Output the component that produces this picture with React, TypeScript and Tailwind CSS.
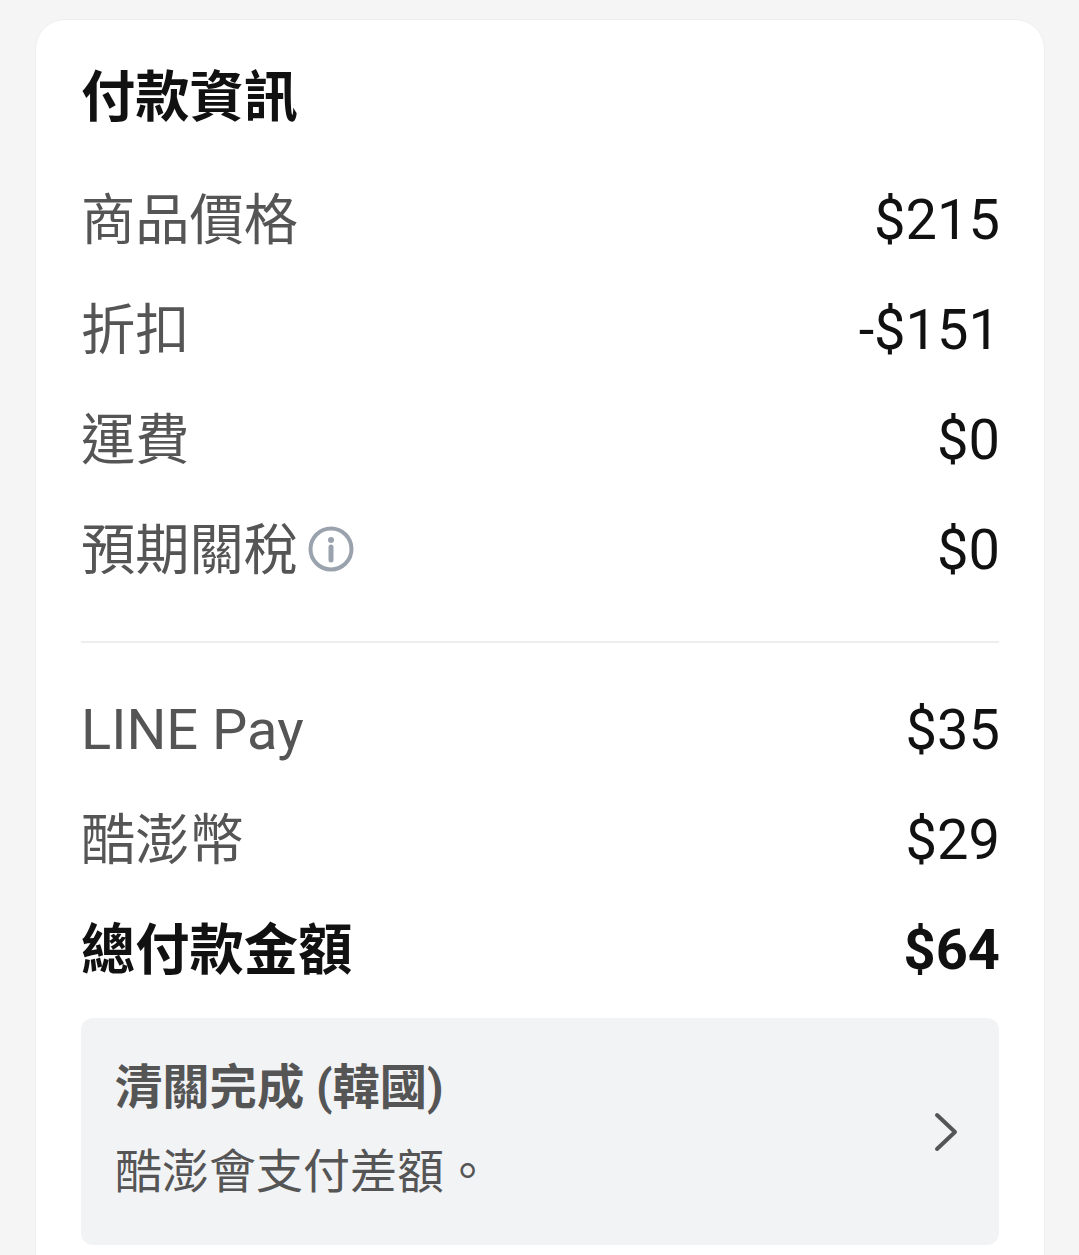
const font = "font-['Roboto','Noto_Sans_CJK_TC',sans-serif]";

function Row({ label, value, latin, children }: { label: string; value: string; latin?: boolean; children?: React.ReactNode }) {
  return (
    <div className="flex h-[66px] items-center justify-between">
      <div className={`flex items-center gap-[10px] text-[#555555] ${latin ? "text-[56px]" : ""}`}>
        <span className={latin ? "" : "translate-y-[1px]"}>{label}</span>
        {children}
      </div>
      <span className="mr-[-1px] text-[56px] text-[#111111]">{value}</span>
    </div>
  );
}

export default function App() {
  return (
    <div className={`h-[1255px] w-[1079px] overflow-hidden bg-[#f5f5f5] pt-[19px] pl-[35px] ${font} text-[54.25px] leading-[66px]`}>
      <div className="h-[1300px] w-[1010px] rounded-t-[30px] border border-[#eeeeee] bg-white px-[45px] pt-[44px]">
        <h2 className="h-[66px] translate-y-[1px] font-bold text-[#111111]">付款資訊</h2>
        <div className="mt-[57px] flex flex-col gap-[44px]">
          <Row label="商品價格" value="$215" />
          <Row label="折扣" value="-$151" />
          <Row label="運費" value="$0" />
          <Row label="預期關稅" value="$0">
            <svg className="-translate-y-[1px]" width="46" height="46" viewBox="0 0 46 46" fill="none" stroke="#9aa3ad">
              <circle cx="23" cy="23" r="20.5" strokeWidth="4" />
              <circle cx="23" cy="14" r="3" fill="#9aa3ad" stroke="none" />
              <path d="M23 21v13" strokeWidth="5" strokeLinecap="round" />
            </svg>
          </Row>
        </div>
        <div className="mt-[58px] h-[2px] bg-[#eeeeee]" />
        <div className="mt-[54px] flex flex-col gap-[44px]">
          <Row label="LINE Pay" value="$35" latin />
          <Row label="酷澎幣" value="$29" />
          <div className="flex h-[66px] items-center justify-between font-bold text-[#111111]">
            <span className="translate-y-[1px]">總付款金額</span>
            <span className="mr-[-1px] text-[56px]">$64</span>
          </div>
        </div>
        <div className="mt-[35px] flex h-[227px] items-center justify-between rounded-[12px] bg-[#f2f3f5] pl-[34px] pr-[40px] text-[47px] leading-[60px] text-[#555555]">
          <div className="flex flex-col gap-[24px] pb-[4px]">
            <span className="text-[47.3px] font-bold">清關完成 (韓國)</span>
            <span>酷澎會支付差額。</span>
          </div>
          <svg width="26" height="40" viewBox="0 0 26 40" fill="none" stroke="#555555" strokeWidth="4" strokeLinecap="round" strokeLinejoin="round">
            <path d="M4 3l18 17L4 37" />
          </svg>
        </div>
      </div>
    </div>
  );
}
